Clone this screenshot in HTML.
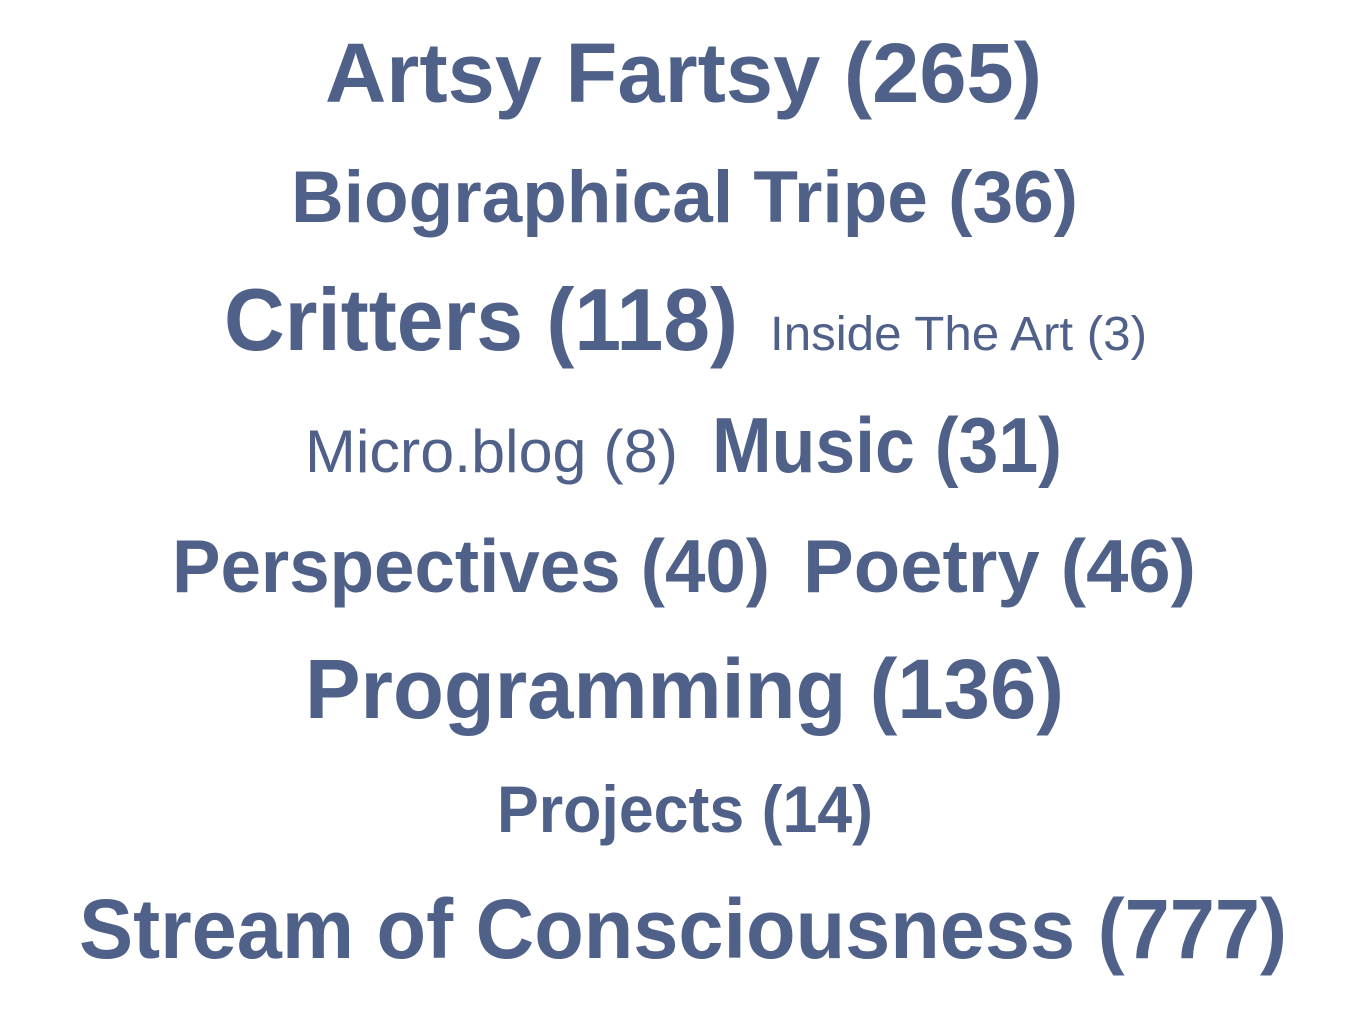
<!DOCTYPE html>
<html><head><meta charset="utf-8"><style>
html,body{margin:0;padding:0;background:#fff;}
svg{display:block;}
text{font-family:"Liberation Sans",sans-serif;fill:#4f6089;}
.b{font-weight:bold;}
</style></head><body>
<svg width="1367" height="1025" viewBox="0 0 1367 1025" xmlns="http://www.w3.org/2000/svg">
<text class="b" x="325" y="102" font-size="84" textLength="717" lengthAdjust="spacingAndGlyphs">Artsy Fartsy (265)</text>
<text class="b" x="291" y="222" font-size="73" textLength="787" lengthAdjust="spacingAndGlyphs">Biographical Tripe (36)</text>
<text class="b" x="224" y="350" font-size="88" textLength="514" lengthAdjust="spacingAndGlyphs">Critters (118)</text>
<text x="770" y="350" font-size="48" textLength="377" lengthAdjust="spacingAndGlyphs">Inside The Art (3)</text>
<text x="305" y="472" font-size="60" textLength="373" lengthAdjust="spacingAndGlyphs">Micro.blog (8)</text>
<text class="b" x="712" y="472" font-size="78" textLength="350" lengthAdjust="spacingAndGlyphs">Music (31)</text>
<text class="b" x="172" y="592" font-size="75" textLength="598" lengthAdjust="spacingAndGlyphs">Perspectives (40)</text>
<text class="b" x="803" y="592" font-size="75" textLength="393" lengthAdjust="spacingAndGlyphs">Poetry (46)</text>
<text class="b" x="305" y="718" font-size="84" textLength="759" lengthAdjust="spacingAndGlyphs">Programming (136)</text>
<text class="b" x="497" y="832" font-size="66" textLength="376" lengthAdjust="spacingAndGlyphs">Projects (14)</text>
<text class="b" x="79" y="958" font-size="84" textLength="1208" lengthAdjust="spacingAndGlyphs">Stream of Consciousness (777)</text>
</svg>
</body></html>
